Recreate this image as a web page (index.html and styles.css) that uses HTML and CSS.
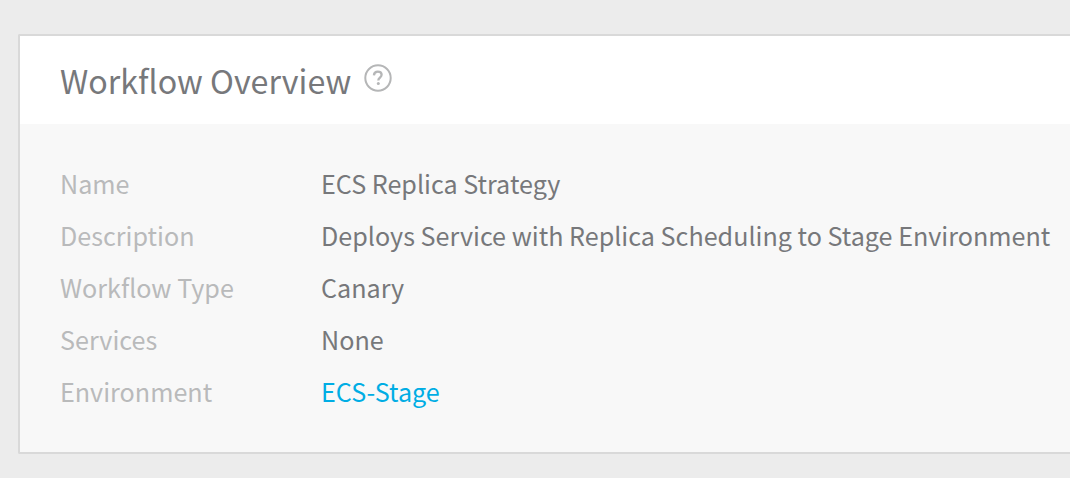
FILE: index.html
```html
<!DOCTYPE html>
<html lang="en">
<head>
<meta charset="utf-8">
<title>Workflow Overview</title>
<link rel="stylesheet" href="styles.css">
</head>
<body>
<section class="card">
  <header class="card-header">
    <h1 class="title">Workflow Overview</h1>
    <svg class="help" viewBox="0 0 28 28" width="28" height="28" fill="none" stroke="#b5b6b7" stroke-width="2">
      <circle cx="14" cy="14" r="12.7"/>
      <path d="M9.9 11.3c.2-2.3 1.7-3.6 3.9-3.6 2.3 0 3.8 1.2 3.8 3.1 0 2.7-3.3 2.9-3.3 5.7" stroke-width="2.3"/>
      <circle cx="14.3" cy="19.4" r="1.5" fill="#b5b6b7" stroke="none"/>
    </svg>
  </header>
  <dl class="details">
    <dt>Name</dt><dd>ECS Replica Strategy</dd>
    <dt>Description</dt><dd>Deploys Service with Replica Scheduling to Stage Environment</dd>
    <dt>Workflow Type</dt><dd>Canary</dd>
    <dt>Services</dt><dd>None</dd>
    <dt>Environment</dt><dd><a class="link" href="#">ECS-Stage</a></dd>
  </dl>
</section>
</body>
</html>
```

FILE: styles.css
```css
* { box-sizing: border-box; }
body {
  margin: 0;
  height: 478px;
  padding: 34px 0 24px 18px;
  overflow: hidden;
  background: #ececec;
  color: #77787b;
  font-family: "Noto Sans CJK SC", "Noto Sans", sans-serif;
}
.card {
  height: 420px;
  border: 2px solid #d9d9d9;
  border-right: 0;
  border-radius: 2px 0 0 2px;
  background: #f8f8f8;
}
.card-header {
  display: flex;
  height: 88px;
  padding: 0 40px;
  gap: 13px;
  background: #fff;
}
.title {
  margin: 0;
  font-size: 32.2px;
  font-weight: 400;
  line-height: 88px;
  white-space: nowrap;
}
.help { margin-top: 28px; flex: none; }
.details {
  display: grid;
  grid-template-columns: 261px 1fr;
  grid-auto-rows: 52px;
  margin: 0;
  padding: 33px 0 0 40px;
  font-size: 25.14px;
  line-height: 52px;
  white-space: nowrap;
}
.details dt { color: #b9babb; }
.details dd { margin: 0; }
.link { color: #00ade4; text-decoration: none; }
```
